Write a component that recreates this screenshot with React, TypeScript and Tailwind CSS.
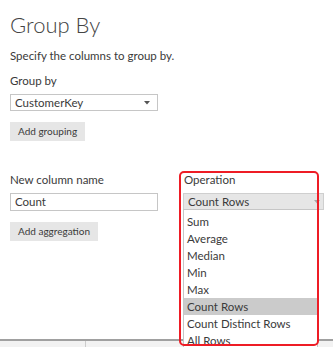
import React from "react";

const OPS = [
  "Sum",
  "Average",
  "Median",
  "Min",
  "Max",
  "Count Rows",
  "Count Distinct Rows",
  "All Rows",
];

function Caret({ light }: { light?: boolean }) {
  return (
    <svg width="6" height="4" viewBox="0 0 6 4" className="shrink-0">
      <path d="M0 0 L6 0 L3 3.5 Z" fill={light ? "#a6a6a6" : "#555555"} />
    </svg>
  );
}

export default function App() {
  return (
    <div className="relative w-[333px] h-[347px] overflow-hidden bg-white font-['Lato',sans-serif] text-[#3a3a3a]">
      <div className="h-[339px] pl-[10px]">
        <h1 className="pt-[11px] text-[22px] leading-[28px] font-light text-[#444444]">
          Group By
        </h1>
        <p className="mt-[9px] text-[11.5px] leading-[16px]">
          Specify the columns to group by.
        </p>
        <p className="mt-[9px] text-[11.5px] leading-[16px]">Group by</p>
        <div className="mt-[5px] w-[148px] h-[17px] border border-[#c6c6c6] flex items-center justify-between pl-[4px] pr-[7px] text-[11.5px]">
          <span>CustomerKey</span>
          <Caret />
        </div>
        <button className="mt-[11px] h-[19px] px-[8px] bg-[#e6e6e6] text-[10px] leading-[19px]">
          Add grouping
        </button>

        <div className="mt-[31px] grid grid-cols-[148px_141px] gap-x-[25px]">
          <div>
            <p className="text-[11.5px] leading-[16px]">New column name</p>
            <div className="mt-[5px] h-[18px] border border-[#c6c6c6] flex items-center pl-[4px] text-[11.5px]">
              Count
            </div>
            <button className="mt-[11px] h-[19px] px-[8px] bg-[#e6e6e6] text-[10px] leading-[19px]">
              Add aggregation
            </button>
          </div>
          <div className="relative">
            <p className="pl-[1px] text-[11.5px] leading-[16px]">Operation</p>
            <div className="mt-[5px] h-[17px] border border-[#cfcfcf] bg-[#e6e6e6] flex items-center justify-between pl-[4px] pr-[3px] text-[11.5px]">
              <span>Count Rows</span>
              <Caret light />
            </div>
            <ul className="absolute left-0 top-[37px] w-[135px] border border-[#c6c6c6] bg-white pt-[3px] text-[11.5px]">
              {OPS.map((op) => (
                <li
                  key={op}
                  className={
                    "h-[17px] leading-[17px] pl-[3px] " +
                    (op === "Count Rows" ? "bg-[#cbcbcb]" : "")
                  }
                >
                  {op}
                </li>
              ))}
            </ul>
          </div>
        </div>
      </div>
      <div className="border-t-[2px] border-[#a0a0a0] h-[8px] bg-[#f2f2f2] flex">
        <div className="w-[86px] border-r border-[#cccccc]" />
      </div>
      <div className="absolute left-[179px] top-[171px] w-[140px] h-[175px] border-2 border-[#ee1c25] rounded-[5px] pointer-events-none" />
    </div>
  );
}
